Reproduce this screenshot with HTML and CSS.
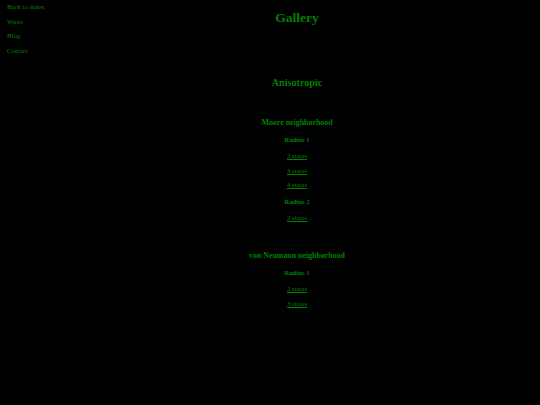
FILE: index.html
```html
<!DOCTYPE html>
<html lang="en">
<head>
<meta charset="utf-8">
<title>Gallery</title>
<link rel="stylesheet" href="styles.css">
</head>
<body>
<nav class="side-nav">
  <a class="nav-link" href="#">Back to index</a>
  <a class="nav-link" href="#">Wires</a>
  <a class="nav-link" href="#">Blog</a>
  <a class="nav-link" href="#">Contact</a>
</nav>
<main class="content">
  <h1 class="page-title">Gallery</h1>
  <section class="family">
    <h2 class="family-title">Anisotropic</h2>
    <section class="neighborhood">
      <h3 class="neighborhood-title">Moore neighborhood</h3>
      <div class="radius">
        <h4 class="radius-title">Radius 1</h4>
        <a class="state-link" href="#">2 states</a>
        <a class="state-link" href="#">3 states</a>
        <a class="state-link" href="#">4 states</a>
      </div>
      <div class="radius">
        <h4 class="radius-title">Radius 2</h4>
        <a class="state-link" href="#">2 states</a>
      </div>
    </section>
    <section class="neighborhood">
      <h3 class="neighborhood-title">von Neumann neighborhood</h3>
      <div class="radius">
        <h4 class="radius-title">Radius 1</h4>
        <a class="state-link" href="#">2 states</a>
        <a class="state-link" href="#">3 states</a>
      </div>
    </section>
  </section>
</main>
</body>
</html>
```
FILE: styles.css
```css
html {
  background: #000;
}
body {
  margin: 0;
  min-height: 405px;
  background: #000;
  color: #008000;
  font-family: "Liberation Serif", "Times New Roman", serif;
  font-size: 6.75px;
  line-height: 1.15;
  display: flex;
  align-items: flex-start;
}
.side-nav {
  width: 54px;
  flex: none;
  padding: 3.4px 0 0 7px;
  box-sizing: border-box;
  display: flex;
  flex-direction: column;
  gap: 6.75px;
}
.nav-link {
  color: #008000;
  text-decoration: none;
  white-space: nowrap;
}
.content {
  flex: 1;
  text-align: center;
  display: flex;
  flex-direction: column;
  align-items: center;
  padding-top: 10px;
  gap: 51.4px;
}
.page-title {
  margin: 0;
  font-size: 13.5px;
  line-height: 1.15;
  font-weight: bold;
}
.family {
  display: flex;
  flex-direction: column;
  align-items: center;
  gap: 29.6px;
}
.family-title {
  margin: 0;
  font-size: 10.125px;
  line-height: 1.15;
  font-weight: bold;
}
.neighborhood {
  display: flex;
  flex-direction: column;
  align-items: center;
  gap: 8.9px;
}
.neighborhood-title {
  margin: 0;
  font-size: 7.9px;
  line-height: 1.15;
  font-weight: bold;
}
.radius {
  display: flex;
  flex-direction: column;
  align-items: center;
  gap: 6.75px;
}
.radius-title {
  margin: 0 0 1.5px;
  font-size: 6.75px;
  line-height: 1.15;
  font-weight: bold;
}
.state-link {
  color: #008000;
  text-decoration: underline;
}
```
